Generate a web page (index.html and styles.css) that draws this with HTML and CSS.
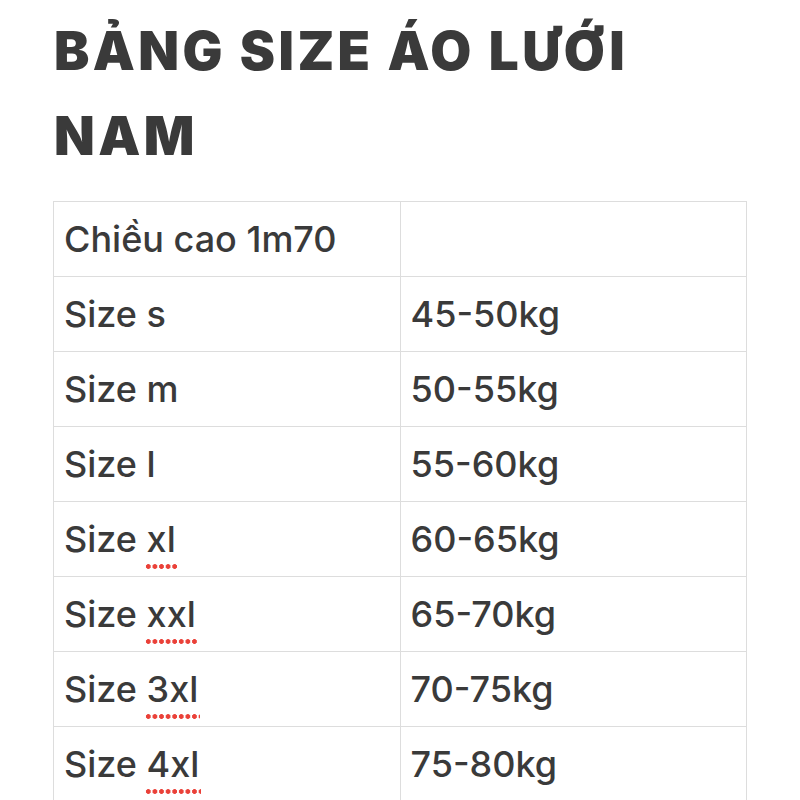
FILE: index.html
```html
<!DOCTYPE html>
<html lang="vi">
<head>
<meta charset="utf-8">
<title>Bảng size áo lưới nam</title>
<link rel="stylesheet" href="styles.css">
</head>
<body>
<main class="page">
  <h1 class="title">BẢNG SIZE ÁO LƯỚI NAM</h1>
  <table class="size-table">
    <tbody>
      <tr><td>Chiều cao 1m70</td><td></td></tr>
      <tr><td>Size s</td><td>45-50kg</td></tr>
      <tr><td>Size m</td><td>50-55kg</td></tr>
      <tr><td>Size l</td><td>55-60kg</td></tr>
      <tr><td>Size <span class="spell">xl</span></td><td>60-65kg</td></tr>
      <tr><td>Size <span class="spell">xxl</span></td><td>65-70kg</td></tr>
      <tr><td>Size <span class="spell">3xl</span></td><td>70-75kg</td></tr>
      <tr><td>Size <span class="spell">4xl</span></td><td>75-80kg</td></tr>
    </tbody>
  </table>
</main>
</body>
</html>
```
FILE: styles.css
```css
html, body {
  margin: 0;
  padding: 0;
  background: #ffffff;
}

body {
  font-family: Inter, "Liberation Sans", Arial, sans-serif;
  color: #3a3a3a;
  overflow: hidden;
}

.page {
  padding: 9px 0 0 53px;
  width: 694px;
}

.title {
  margin: 0 0 22px 1px;
  max-width: 680px;
  font-size: 53px;
  line-height: 85px;
  font-weight: 900;
  color: #3a3a3a;
  letter-spacing: 3.4px;
}

.size-table {
  width: 694px;
  border-collapse: collapse;
  table-layout: fixed;
}

.size-table td {
  width: 50%;
  height: 75px;
  padding: 0 10px;
  border: 1px solid #dddddd;
  font-size: 36px;
  font-weight: 500;
  vertical-align: middle;
  box-sizing: border-box;
}

.spell {
  position: relative;
  display: inline-block;
}

.spell::after {
  content: "";
  position: absolute;
  left: -2px;
  right: -2px;
  bottom: -8px;
  height: 5px;
  background-image: radial-gradient(circle, #ea4038 2.1px, transparent 2.6px);
  background-size: 6.6px 5px;
  background-repeat: repeat-x;
}
```
